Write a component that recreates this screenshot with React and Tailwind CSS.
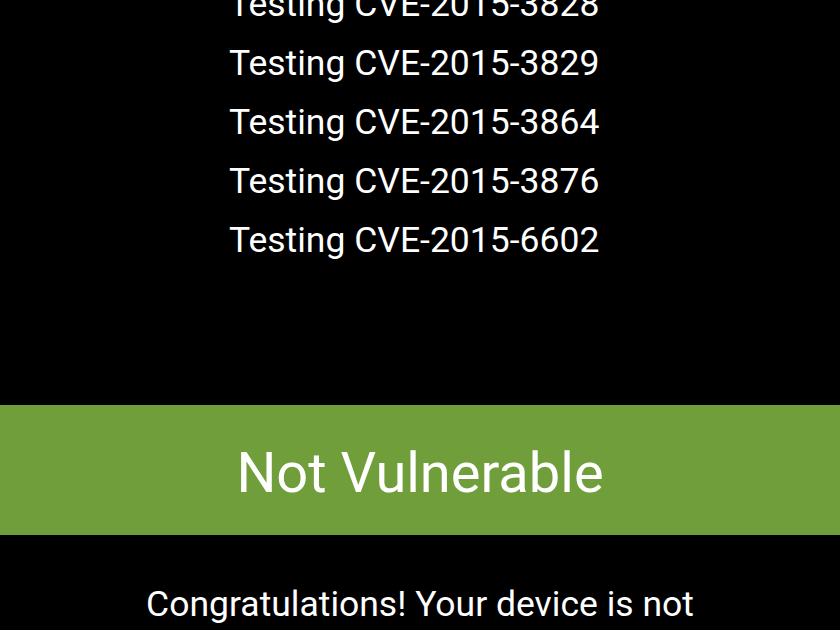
const cves = ["3828", "3829", "3864", "3876", "6602"];

export default function App() {
  return (
    <div className="h-[630px] w-[840px] overflow-hidden bg-black text-white font-['Roboto',sans-serif]">
      <div className="mt-[-25px] flex flex-col items-start pl-[229px]">
        {cves.map((id) => (
          <div key={id} className="text-[35.5px] leading-[59px]">
            Testing CVE-2015-{id}
          </div>
        ))}
      </div>

      <div className="mt-[135px] h-[130px] bg-[#6f9e3a] pt-[6px] text-center text-[56px] leading-[124px]">
        Not Vulnerable
      </div>

      <p className="mt-[45px] px-[100px] text-center text-[35.5px] leading-[48px]">
        Congratulations! Your device is not vulnerable to Stagefright.
      </p>
    </div>
  );
}
